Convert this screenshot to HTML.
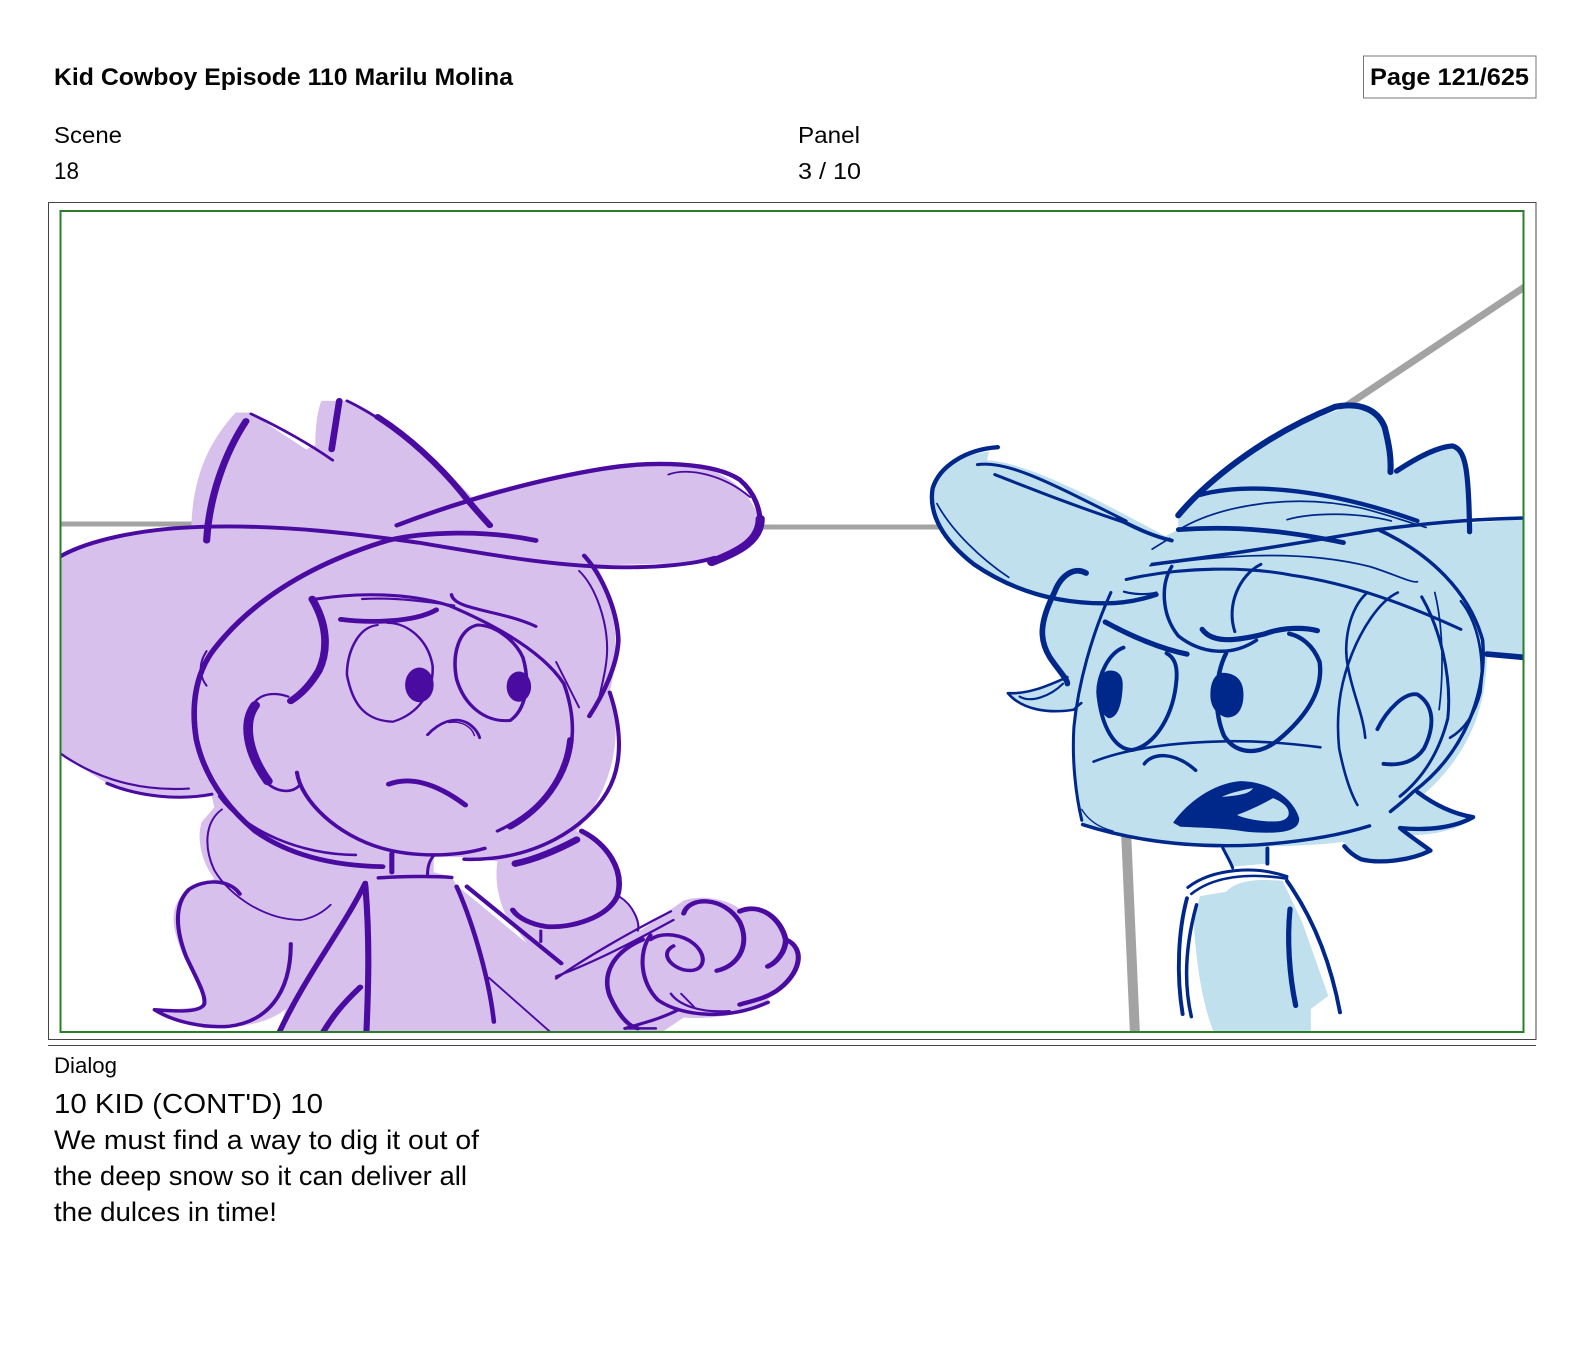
<!DOCTYPE html>
<html lang="en"><head><meta charset="utf-8"><title>Kid Cowboy Episode 110</title>
<style>html,body{margin:0;padding:0;background:#fff}svg{display:block}
text{font-family:"Liberation Sans",sans-serif;fill:#050505}
.p path{fill:none;stroke:#4a0ba0;stroke-linecap:round;stroke-linejoin:round}
.b path{fill:none;stroke:#00288a;stroke-linecap:round;stroke-linejoin:round}
.p path.f{fill:#4a0ba0;stroke:none}.b path.f{fill:#00288a;stroke:none}.b path.h{fill:#c0e0ee;stroke:none}
</style></head><body>
<svg width="1582" height="1350" viewBox="0 0 1582 1350" xmlns="http://www.w3.org/2000/svg">
<defs><clipPath id="c"><rect x="60" y="210" width="1464" height="822"/></clipPath></defs>
<rect width="1582" height="1350" fill="#fff"/>
<text x="54" y="85" font-size="24" font-weight="700" textLength="459" lengthAdjust="spacingAndGlyphs">Kid Cowboy Episode 110 Marilu Molina</text>
<rect x="1363.5" y="56" width="172.5" height="42" fill="none" stroke="#777" stroke-width="1"/>
<text x="1370" y="85" font-size="24" font-weight="700" textLength="159" lengthAdjust="spacingAndGlyphs">Page 121/625</text>
<text x="54" y="143" font-size="23" textLength="68" lengthAdjust="spacingAndGlyphs">Scene</text>
<text x="54" y="179" font-size="24" textLength="25" lengthAdjust="spacingAndGlyphs">18</text>
<text x="798" y="143" font-size="23" textLength="62" lengthAdjust="spacingAndGlyphs">Panel</text>
<text x="798" y="179" font-size="23" textLength="63" lengthAdjust="spacingAndGlyphs">3 / 10</text>
<rect x="48.5" y="202.5" width="1487.5" height="837" fill="none" stroke="#444" stroke-width="1"/>
<g clip-path="url(#c)">
<path d="M60 524H200M755 527H940" stroke="#a3a3a3" stroke-width="5" fill="none"/>
<path d="M1340 410L1526 286" stroke="#a3a3a3" stroke-width="7" fill="none"/>
<path d="M1126 830L1135 1035" stroke="#a3a3a3" stroke-width="10" fill="none"/>

<!-- purple -->
<g class="p" transform="translate(0,380) scale(.5102,.4337)">
<path style="fill:#d8c0ec;stroke:none" d="M100,420L170,375 300,345 375,335C378,250 395,160 462,75L490,75 600,160 618,150C618,110 622,70 630,48L680,48C760,90 860,190 925,270C1000,240 1150,205 1300,190C1400,190 1470,240 1490,330C1485,380 1440,410 1390,420L1170,428C1200,500 1220,600 1195,720C1225,830 1195,950 1130,1040C1190,1075 1225,1130 1215,1190C1240,1210 1255,1240 1255,1270L1340,1200C1380,1185 1430,1200 1450,1220C1490,1210 1530,1240 1540,1290C1570,1310 1575,1370 1520,1410L1500,1435C1470,1460 1400,1475 1340,1470L1290,1510 1080,1510 545,1510 560,1450C530,1480 480,1495 400,1495L305,1455 395,1445C410,1420 360,1350 345,1280C330,1220 350,1175 400,1160L420,1150C395,1110 385,1060 395,1020L420,985 415,960C360,970 280,965 210,930L100,850Z"/>
<path style="fill:#fff;stroke:none" d="M850,1100L905,1100 975,1110C970,1150 975,1190 990,1230L1032,1298 895,1165 885,1145 850,1135Z"/>
<path d="M482,95C440,170 410,270 405,370" stroke-width="14"/>
<path d="M492,78C550,110 610,150 652,185" stroke-width="6"/>
<path d="M665,48L650,160" stroke-width="13"/>
<path d="M680,48C720,70 770,110 800,135" stroke-width="6"/>
<path d="M740,85C800,130 860,195 905,260C925,290 945,315 960,335" stroke-width="13"/>
<path d="M778,335C900,280 1050,230 1180,205C1280,185 1400,190 1450,230C1480,260 1490,300 1490,330" stroke-width="10"/>
<path d="M1310,218C1350,200 1420,220 1470,270" stroke-width="4"/>
<path d="M1490,320C1490,370 1450,395 1395,420" stroke-width="18"/>
<path d="M100,420C160,370 280,340 420,338C560,335 700,355 820,375C950,400 1080,430 1220,432C1290,432 1360,425 1400,410" stroke-width="9"/>
<path d="M1050,370C950,345 830,350 760,370C620,420 500,500 420,620C380,680 375,760 385,830C400,910 440,980 500,1040C560,1090 640,1120 750,1122" stroke-width="11"/>
<path d="M405,625C385,660 395,690 405,705" stroke-width="4"/>
<path d="M430,960C480,1040 590,1095 697,1095" stroke-width="6"/>
<path d="M1145,405C1180,450 1210,530 1212,600C1210,660 1180,730 1155,775" stroke-width="9"/>
<path d="M1135,440C1170,480 1190,560 1190,620C1190,660 1180,700 1175,730" stroke-width="4"/>
<path d="M1195,720C1215,790 1225,880 1190,950C1150,1030 1050,1110 910,1105" stroke-width="8"/>
<path d="M1130,1060C1090,1085 1050,1105 1010,1115" stroke-width="15"/>
<path d="M620,505C700,490 800,490 880,520C960,560 1060,620 1105,700C1130,780 1125,850 1105,900C1070,970 1030,1010 975,1040" stroke-width="7"/>
<path d="M1090,650L1135,755" stroke-width="4"/>
<path d="M1118,830C1110,920 1060,990 1000,1030" stroke-width="13"/>
<path d="M612,505C640,560 645,620 625,670C610,700 590,725 570,740" stroke-width="15"/>
<path d="M565,730C540,720 510,720 495,750C480,790 490,860 520,915" stroke-width="5"/>
<path d="M500,750C475,790 485,860 525,925" stroke-width="19"/>
<path d="M520,925C540,950 570,955 587,935" stroke-width="6"/>
<path d="M582,905C590,970 660,1050 750,1080C810,1100 890,1100 950,1080" stroke-width="8"/>
<path d="M668,552C720,560 810,560 855,530" stroke-width="11"/>
<path d="M710,505C780,500 860,515 890,520" stroke-width="5"/>
<path d="M740,565C700,570 680,630 680,680C690,740 710,785 770,788C820,770 850,720 848,660C840,600 800,560 760,560" stroke-width="5"/>
<ellipse cx="822" cy="703" rx="28" ry="40" fill="#4a0ba0"/>
<path d="M935,565C900,575 885,630 895,690C910,750 950,790 1000,785C1030,760 1040,700 1025,640C1010,600 970,565 935,565" stroke-width="7"/>
<ellipse cx="1017" cy="707" rx="24" ry="35" fill="#4a0ba0"/>
<path d="M885,495C890,530 980,530 1050,568" stroke-width="7"/>
<path d="M838,818C860,790 890,775 915,790C930,800 938,815 940,825" stroke-width="6"/>
<path d="M880,790C905,785 925,800 930,820" stroke-width="3"/>
<path d="M762,932C800,915 850,925 912,980" stroke-width="11"/>
<path d="M768,1092L768,1135" stroke-width="10"/>
<path d="M850,1097C840,1110 838,1125 838,1140" stroke-width="6"/>
<path d="M742,1148C780,1145 850,1143 885,1147" stroke-width="8"/>
<path d="M435,990C400,1020 400,1080 420,1130C450,1190 520,1245 590,1245C615,1240 635,1225 648,1210" stroke-width="4"/>
<path d="M470,1185C450,1150 400,1150 370,1175C340,1210 345,1270 365,1330C385,1380 405,1420 400,1440C390,1460 340,1455 303,1452C340,1480 400,1495 450,1490C520,1480 570,1420 570,1300" stroke-width="8"/>
<path d="M716,1160C670,1270 600,1370 545,1510" stroke-width="11"/>
<path d="M716,1165C725,1290 722,1400 718,1510" stroke-width="12"/>
<path d="M706,1400C670,1440 650,1470 630,1510" stroke-width="12"/>
<path d="M895,1168C930,1260 960,1390 968,1480" stroke-width="9"/>
<path d="M958,1378L1085,1510" stroke-width="4"/>
<path d="M915,1168L1100,1345" stroke-width="9"/>
<path d="M1140,1040C1190,1070 1225,1130 1210,1190C1190,1240 1120,1265 1070,1260C1040,1255 1015,1240 1005,1222" stroke-width="11"/>
<path d="M1060,1270L1060,1295" stroke-width="6"/>
<path d="M1215,1192C1240,1210 1255,1250 1250,1270" stroke-width="4"/>
<path d="M1090,1380C1150,1330 1240,1270 1315,1225" stroke-width="5"/>
<path d="M1090,1375C1170,1340 1250,1290 1320,1245" stroke-width="5"/>
<path d="M1260,1290C1200,1320 1180,1370 1195,1420C1210,1460 1230,1490 1250,1495" stroke-width="9"/>
<path d="M1225,1495L1285,1495" stroke-width="6"/>
<path d="M1330,1452C1300,1470 1270,1480 1225,1495" stroke-width="7"/>
<path d="M1275,1280C1250,1320 1255,1390 1290,1430C1340,1470 1430,1475 1505,1435" stroke-width="8"/>
<path d="M1320,1305C1295,1320 1310,1350 1340,1360C1380,1370 1390,1330 1360,1300C1340,1280 1300,1270 1275,1290" stroke-width="8"/>
<path d="M1340,1230C1350,1190 1420,1190 1450,1250C1470,1300 1450,1350 1405,1362" stroke-width="10"/>
<path d="M1450,1225C1490,1205 1530,1240 1540,1290C1540,1320 1520,1345 1505,1352" stroke-width="11"/>
<path d="M1540,1290C1580,1310 1570,1370 1520,1410C1500,1425 1480,1430 1450,1440" stroke-width="10"/>
<path d="M1315,1415C1330,1440 1370,1460 1430,1455" stroke-width="5"/>
<path d="M1335,1415L1360,1445" stroke-width="4"/>
<path d="M100,845C170,910 260,950 370,942" stroke-width="5"/>
<path d="M210,930C270,960 350,970 415,955" stroke-width="7"/>
</g>

<!-- blue -->
<g class="b" transform="translate(900,380) scale(.4348,.4337)">
<path style="fill:#c0e0ee;stroke:none" d="M205,165C130,175 75,210 75,250C70,320 110,380 170,425C230,470 290,495 350,510L360,490C325,560 325,610 355,650L380,680C350,710 300,722 248,722C280,760 340,770 400,760C395,800 395,900 415,1020C470,1045 600,1075 740,1078L765,1122 845,1115 850,1075C920,1075 980,1070 1020,1065C1040,1095 1070,1112 1110,1112C1160,1112 1200,1100 1220,1090L1170,1050C1230,1050 1290,1035 1318,1010C1280,1000 1230,980 1200,960C1290,880 1350,780 1350,630L1440,640 1440,320 1310,330C1310,260 1305,200 1295,165L1270,152C1220,160 1180,190 1130,212C1130,150 1110,70 1060,58C960,70 780,170 640,310L640,345 610,360C480,290 300,190 200,185Z"/>
<path style="fill:#c0e0ee;stroke:none" d="M690,1190L750,1180C770,1160 800,1148 880,1155L925,1250 985,1420 945,1450 945,1510 725,1510C700,1460 680,1350 675,1240Z"/>
<path d="M225,155C150,160 90,200 75,250C65,310 100,370 170,425C250,480 350,515 470,515C520,515 560,505 590,495" stroke-width="10"/>
<path d="M85,285C120,350 190,415 250,455" stroke-width="4"/>
<path d="M178,195C250,185 350,240 520,325" stroke-width="7"/>
<path d="M218,218C300,250 400,290 515,328" stroke-width="7"/>
<path d="M500,320C540,340 580,360 625,370" stroke-width="9"/>
<path d="M640,312C700,240 830,130 1000,62C1060,50 1100,70 1115,110C1125,150 1130,180 1128,212" stroke-width="14"/>
<path d="M1142,210C1180,185 1230,155 1270,152C1300,160 1308,200 1310,350" stroke-width="12"/>
<path d="M690,265C780,240 950,240 1190,325" stroke-width="10"/>
<path d="M640,345C780,335 900,350 1020,375" stroke-width="11"/>
<path d="M580,425C780,400 950,370 1100,345C1250,325 1350,320 1440,318" stroke-width="8"/>
<path d="M650,340C740,290 900,260 1060,295C1120,310 1160,325 1210,340" stroke-width="4"/>
<path d="M890,322C950,305 1050,305 1130,325" stroke-width="4"/>
<path d="M580,390L620,365" stroke-width="4"/>
<path d="M1350,632L1440,640" stroke-width="13"/>
<path d="M520,460C650,430 800,430 900,450C1040,470 1170,520 1290,575" stroke-width="7"/>
<path d="M575,428C700,410 900,385 1080,430C1130,445 1180,470 1190,465" stroke-width="4"/>
<path d="M515,488C540,495 570,495 590,490" stroke-width="5"/>
<path d="M625,430C600,470 600,540 640,590C690,630 760,640 820,600" stroke-width="8"/>
<path d="M830,425C780,450 750,520 770,580" stroke-width="7"/>
<path d="M695,575C720,610 780,600 840,585C880,570 930,570 960,578" stroke-width="12"/>
<path d="M472,558C530,590 600,620 660,632" stroke-width="12"/>
<path d="M514,617C480,630 456,680 456,720C462,800 495,853 535,853C590,840 630,770 636,690C638,660 632,640 613,630" stroke-width="9"/>
<path class="f" d="M480,670C500,668 515,680 512,710C510,750 500,780 480,780C460,770 450,740 452,710C455,690 465,672 480,670Z"/>
<path d="M750,630C725,680 720,760 745,820C770,860 820,870 870,830C930,780 975,720 965,650C950,610 920,590 895,585" stroke-width="10"/>
<path class="f" d="M740,675C770,675 790,690 790,725C790,760 775,780 750,778C725,770 712,750 714,720C715,695 725,678 740,675Z"/>
<path d="M445,880C520,850 630,835 750,833C830,832 900,838 967,847" stroke-width="6"/>
<path d="M562,885C580,860 630,855 680,900" stroke-width="8"/>
<path class="f" d="M628,1021C660,975 720,930 782,925C850,925 905,965 918,1010C920,1040 880,1048 800,1042C740,1032 680,1032 645,1030Z"/>
<path class="h" d="M775,1003C810,990 840,975 858,964C885,975 898,990 893,1005C885,1020 860,1020 821,1015C800,1012 785,1008 775,1003Z"/>
<path class="h" d="M740,961C765,950 790,945 812,941C808,947 802,950 798,952C780,958 760,960 740,961Z"/>
<path d="M485,490C440,590 410,700 400,800C395,880 405,960 418,1015" stroke-width="7"/>
<path d="M420,1025C560,1070 700,1078 820,1072C920,1065 1010,1050 1080,1028" stroke-width="8"/>
<path d="M418,990C430,1010 450,1030 490,1040" stroke-width="3"/>
<path d="M428,445C400,430 370,450 355,490C320,560 320,600 345,640C365,670 385,690 385,700" stroke-width="13"/>
<path d="M385,685C350,700 300,725 248,722C280,760 340,770 400,760C405,755 410,750 417,745" stroke-width="6"/>
<path d="M275,730C300,745 345,730 375,700" stroke-width="5"/>
<path d="M1075,490C1030,530 1020,610 1030,660C1040,720 1065,770 1070,825" stroke-width="6"/>
<path d="M1145,490C1100,510 1060,580 1040,630C1020,680 1000,750 1010,850C1020,900 1035,950 1052,980" stroke-width="6"/>
<path d="M1098,805C1120,760 1160,720 1190,725C1230,750 1230,800 1205,850C1185,880 1150,890 1112,885" stroke-width="9"/>
<path d="M1200,500C1240,570 1270,680 1260,780C1240,860 1200,920 1150,960" stroke-width="7"/>
<path d="M1230,490C1250,570 1250,680 1240,760" stroke-width="4"/>
<path d="M1100,345C1220,400 1310,490 1340,600C1350,720 1300,860 1180,950C1160,970 1140,985 1128,995" stroke-width="8"/>
<path d="M1290,510C1330,560 1345,640 1335,720C1320,780 1290,810 1265,825" stroke-width="6"/>
<path d="M1190,950C1230,980 1270,1000 1318,1008C1280,1030 1220,1040 1150,1033C1170,1050 1200,1070 1220,1085C1170,1110 1100,1115 1060,1105C1040,1095 1030,1085 1022,1075" stroke-width="10"/>
<path d="M742,1078C750,1095 760,1110 765,1125" stroke-width="7"/>
<path d="M845,1080L845,1115" stroke-width="9"/>
<path d="M662,1170C720,1125 820,1120 890,1145" stroke-width="7"/>
<path d="M670,1185C720,1145 800,1135 890,1150" stroke-width="6"/>
<path d="M660,1195C640,1270 635,1370 650,1462" stroke-width="9"/>
<path d="M682,1210C660,1290 650,1380 670,1468" stroke-width="8"/>
<path d="M890,1155C950,1240 990,1340 1012,1458" stroke-width="9"/>
<path d="M897,1220C890,1290 895,1370 910,1442" stroke-width="12"/>
</g>
</g>
<rect x="60.5" y="211" width="1463" height="821" fill="none" stroke="#2a7d2a" stroke-width="2"/>
<path d="M48 1045.5H1536" stroke="#444" stroke-width="1"/>
<text x="54" y="1073" font-size="22" textLength="63" lengthAdjust="spacingAndGlyphs">Dialog</text>
<text x="54" y="1113" font-size="28" textLength="269" lengthAdjust="spacingAndGlyphs">10 KID (CONT'D) 10</text>
<text x="54" y="1149" font-size="27" textLength="425" lengthAdjust="spacingAndGlyphs">We must find a way to dig it out of</text>
<text x="54" y="1185" font-size="27" textLength="413" lengthAdjust="spacingAndGlyphs">the deep snow so it can deliver all</text>
<text x="54" y="1221" font-size="27" textLength="223" lengthAdjust="spacingAndGlyphs">the dulces in time!</text>
</svg>
</body></html>
